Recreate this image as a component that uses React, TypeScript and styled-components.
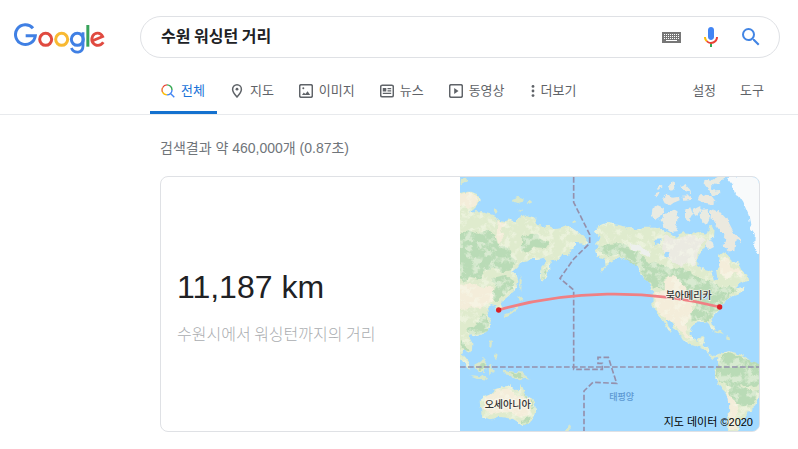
import React from "react";
import styled, { createGlobalStyle } from "styled-components";

const GlobalStyle = createGlobalStyle`
  *, *::before, *::after { box-sizing: border-box; }
  body {
    margin: 0;
    background: #fff;
    color: #202124;
    font-family: "Liberation Sans", "Noto Sans CJK KR", sans-serif;
    font-size: 14px;
  }
`;

const TopBar = styled.header`
  border-bottom: 1px solid #e8eaed;
`;

const SearchRow = styled.div`
  display: flex;
  align-items: center;
  padding: 16px 18px 0 14px;
`;

const LogoLink = styled.a`
  display: block;
  flex: 0 0 126px;
  padding-top: 2px;
  svg { display: block; }
`;

const SearchForm = styled.form`
  display: flex;
  align-items: center;
  flex: 1;
  height: 42px;
  max-width: 640px;
  padding: 0 16px 0 20px;
  border: 1px solid #dfe1e5;
  border-radius: 21px;
`;

const SearchInput = styled.input`
  flex: 1;
  min-width: 0;
  padding: 0 0 4px;
  border: 0;
  outline: 0;
  background: transparent;
  color: #202124;
  font: bold 16px/24px "Noto Sans CJK KR", sans-serif;
`;

const IconButton = styled.button`
  display: flex;
  align-items: center;
  justify-content: center;
  width: 40px;
  height: 40px;
  padding: 0;
  border: 0;
  background: none;
  cursor: pointer;
  &:last-child { width: 24px; margin-left: 8px; }
`;

const NavRow = styled.div`
  display: flex;
  justify-content: space-between;
  max-width: 798px;
  margin-top: 11px;
  padding: 0 34px 0 150px;
`;

const Tabs = styled.nav`
  display: flex;
  gap: 2px;
`;

const navText = `
  font-size: 13px;
  line-height: 20px;
  text-decoration: none;
  white-space: nowrap;
`;

const Tab = styled.a<{ $active?: boolean }>`
  ${navText}
  display: flex;
  align-items: center;
  gap: 6px;
  height: 45px;
  padding: 2px 12px 0 11px;
  border-bottom: 3px solid ${(p) => (p.$active ? "#1471cf" : "transparent")};
  color: ${(p) => (p.$active ? "#1a73d8" : "#5f6368")};
`;

const Tools = styled.div`
  display: flex;
  align-items: center;
  gap: 24px;
  height: 42px;
  padding-top: 2px;
`;

const ToolButton = styled.button`
  ${navText}
  padding: 0;
  border: 0;
  background: none;
  color: #5f6368;
  font-family: inherit;
  cursor: pointer;
`;

const Results = styled.main`
  max-width: 798px;
  padding: 22px 38px 16px 160px;
`;

const Stats = styled.p`
  margin: 0 0 17px;
  color: #70757a;
  line-height: 22px;
`;

const Card = styled.section`
  display: grid;
  grid-template-columns: 1fr 1fr;
  overflow: hidden;
  border: 1px solid #dfe1e5;
  border-radius: 8px;
`;

const Answer = styled.div`
  display: flex;
  flex-direction: column;
  justify-content: center;
  gap: 14px;
  padding: 4px 16px 0;
`;

const Distance = styled.h1`
  margin: 0;
  font-size: 32px;
  font-weight: 400;
  line-height: 40px;
`;

const Caption = styled.p`
  margin: 0;
  color: #aaadb0;
  font: 300 16px/24px "Noto Sans CJK KR", sans-serif;
`;

const MapLink = styled.a`
  position: relative;
  display: block;
  aspect-ratio: 299 / 254;
  overflow: hidden;
  background: #a3daff;
  color: #202124;
  text-decoration: none;
`;

const MapDrawing = styled.svg`
  display: block;
  width: 100%;
  height: 100%;
  text {
    font-family: "Noto Sans CJK KR", sans-serif;
    font-weight: 500;
    paint-order: stroke;
    stroke-linejoin: round;
  }
`;

const Attribution = styled.span`
  position: absolute;
  right: 6px;
  bottom: 0;
  color: #000;
  font-size: 11px;
  line-height: 17px;
`;

function Logo() {
  return (
    <svg width="91" height="31" viewBox="42 69 273 93" fill="none" strokeWidth="9" aria-hidden="true">
      <path d="M99 84.500A29.800 29.800 0 1 0 106 107H77" stroke="#4080e4" />
      <circle cx="137" cy="118" r="18" stroke="#e04a40" />
      <circle cx="185" cy="118" r="18" stroke="#f8b932" />
      <circle cx="232" cy="118" r="18" stroke="#4080e4" />
      <path d="M249 97V137C249 162 222 161 214 144" stroke="#4080e4" strokeWidth="8.500" />
      <path d="M263.500 75V140" stroke="#38a35b" />
      <path d="M276 123L308 109.500C302 96 285 96 278 108C270 125 283 136 294 136Q304 136 310 127" stroke="#e04a40" strokeWidth="8.500" />
    </svg>
  );
}

function KeyboardIcon() {
  const columns = [2, 4, 6, 8, 10, 12, 14, 16];
  return (
    <svg width="19" height="11" viewBox="0 0 19 11" shapeRendering="crispEdges" aria-hidden="true">
      <path d="M0 0h19v11H0z" fill="#777" />
      {[2, 4, 6].map((y) =>
        columns.map((x) => <path key={`${x}-${y}`} d={`M${x} ${y}h1v1h-1z`} fill="#fff" />)
      )}
      <path d="M4 8h11v1H4z" fill="#fff" />
    </svg>
  );
}

function MicIcon() {
  return (
    <svg width="24" height="24" viewBox="0 0 24 24" aria-hidden="true">
      <path fill="#4285f4" d="M12 15c1.660 0 3-1.310 3-2.970V4.980C15 3.320 13.660 2 12 2S9 3.320 9 4.980v7.050C9 13.690 10.340 15 12 15z" />
      <path fill="#34a853" d="M11 18.080h2V22h-2z" />
      <path fill="#fbbc05" d="M7.050 16.870C5.780 15.600 5 13.920 5 12h2c0 1.450.560 2.420 1.470 3.380z" />
      <path fill="#ea4335" d="M12 16.930c-1.440 0-2.660-.600-3.580-1.550l-1.370 1.490A6.960 6.960 0 0 0 11.990 19c3.870 0 7.010-3.130 7.010-7h-2c0 2.760-2.230 4.930-5 4.930z" />
    </svg>
  );
}

function SearchIcon() {
  return (
    <svg width="24" height="24" viewBox="0 0 24 24" fill="#4285e4" aria-hidden="true">
      <path d="M15.500 14h-.790l-.280-.270A6.470 6.470 0 0 0 16 9.500 6.500 6.500 0 1 0 9.500 16c1.610 0 3.090-.590 4.230-1.570l.270.280v.790l5 4.990L20.490 19zm-6 0C7.010 14 5 11.990 5 9.500S7.010 5 9.500 5 14 7.010 14 9.500 11.990 14 9.500 14z" />
    </svg>
  );
}

function TabIcon({ kind }: { kind: string }) {
  const frame = <rect x="0.700" y="0.700" width="12.600" height="12.600" rx="1.500" fill="none" stroke="currentColor" strokeWidth="1.500" />;
  return (
    <svg width={kind === "more" ? 5 : 14} height="14" viewBox={kind === "more" ? "0 0 5 14" : "0 0 14 14"} fill="currentColor" aria-hidden="true">
      {kind === "all" && (
        <g fill="none" strokeWidth="1.400">
          <path d="M1.700 3.500A5 5 0 0 1 6 .900" stroke="#ea4335" />
          <path d="M1.700 3.500A5 5 0 0 0 1.500 8" stroke="#ea7335" />
          <path d="M1.500 8A5 5 0 0 0 6 10.900" stroke="#fbbc05" />
          <path d="M6 .900A5 5 0 0 1 11 5.900" stroke="#34a853" />
          <path d="M11 5.900A5 5 0 0 1 6 10.900M9.500 9.500L13.300 13.300" stroke="#4285f4" />
        </g>
      )}
      {kind === "maps" && (
        <>
          <path d="M7 .800A4.400 4.400 0 0 0 2.600 5.200C2.600 8.200 7 13 7 13S11.400 8.200 11.400 5.200A4.400 4.400 0 0 0 7 .800Z" fill="none" stroke="currentColor" strokeWidth="1.500" />
          <circle cx="7" cy="5.200" r="1.400" />
        </>
      )}
      {kind === "images" && <>{frame}<circle cx="4.300" cy="4.300" r="1" /><path d="M3 11L4.800 8.500L6.300 10L8.600 7.300L11.200 11Z" /></>}
      {kind === "news" && (
        <>
          <rect x="0.700" y="1.200" width="12.600" height="11.600" rx="1.500" fill="none" stroke="currentColor" strokeWidth="1.500" />
          <path d="M2.800 4h3.500v3.500H2.800zM7.500 4h3.700v1.200H7.500zM7.500 6.300h3.700v1.200H7.500zM2.800 8.800h8.400V10H2.800z" />
        </>
      )}
      {kind === "videos" && <>{frame}<path d="M5.200 4L9.500 7L5.200 10Z" /></>}
      {kind === "more" && <><circle cx="3" cy="2.400" r="1.400" /><circle cx="3" cy="7" r="1.400" /><circle cx="3" cy="11.600" r="1.400" /></>}
    </svg>
  );
}

const continents = [
  // Asia
  "M0 56L20 50L40 50L58 58L65 75L60 90L45 105L35 112L70 112L98 118L112 124L120 137L145 142L152 130L166 138L182 128L195 126L208 120L230 127L240 150L275 154L290 162L310 160L325 153L342 160L360 172L378 185L391 200L385 210L365 205L350 203L352 212L340 224L330 240L312 240L300 253L280 260L273 268L274 287L262 305L250 320L246 300L250 275L262 262L258 248L240 252L215 252L200 258L186 264L176 278L160 292L176 299L181 320L172 345L155 360L141 372L130 381L137 398L130 408L117 405L112 394L99 390L87 400L92 419L99 438L95 455L82 471L61 480L44 484L36 478L32 489L43 509L42 525L28 535L17 522L12 536L31 562L40 586L30 581L0 540Z",
  // Australia
  "M65 674L76 665L95 659L110 646L125 641L135 634L149 633L161 627L162 639L174 649L184 645L189 626L196 642L205 659L218 669L230 684L234 704L226 729L215 746L195 750L180 741L165 732L140 728L120 725L99 733L84 729L74 724L72 704L66 689Z",
  // North and Central America
  "M408 170L425 151L445 143L480 149L510 158L535 164L555 155L590 155L616 166L636 173L650 185L680 172L710 176L730 170L750 174L755 150L770 160L768 185L750 195L740 215L720 245L718 270L740 285L760 290L768 317L778 310L775 285L790 270L782 240L795 232L812 240L822 265L838 258L850 285L868 300L870 318L845 325L835 340L860 335L852 351L825 362L804 376L795 392L787 402L768 422L760 435L769 462L763 470L753 446L740 440L715 443L701 455L698 475L706 495L719 500L726 485L740 482L738 499L732 510L750 516L755 535L768 543L795 536L792 547L766 551L749 535L735 521L720 514L695 506L675 496L665 479L650 459L635 439L620 431L636 458L642 474L631 465L615 439L600 419L590 407L583 388L585 347L570 322L550 301L540 276L525 262L500 250L485 246L470 256L448 271L427 292L430 282L443 272L441 255L420 246L410 226L425 215L411 205L429 190Z",
  // South America
  "M781 549L795 532L815 529L835 534L860 544L875 556L900 569L915 575V650L897 674L890 695L870 710L860 730L845 736L840 775H806L812 715L814 675L805 654L785 635L772 609L770 589L780 574Z",
];

const islands = [
  "M165 72L182 66L197 70L195 80L178 85L166 80Z",
  "M206 77L216 75L223 82L214 86Z",
  "M107 105L115 103L119 112L112 116Z",
  "M181 104L190 102L191 108Z",
  "M342 137L352 136L355 142L346 143Z",
  "M185 301L191 313L190 350L184 339Z",
  "M178 367L188 363L195 371L183 379Z",
  "M182 388L178 402L160 416L140 426L134 420L155 413L170 402Z",
  "M95 495L102 499L99 520L94 513Z",
  "M110 534L119 542L116 551L107 545Z",
  "M53 567L67 559L74 549L86 556L83 573L80 594L59 594L51 580Z",
  "M92 573L104 568L99 578L108 595L99 590L94 599Z",
  "M34 600L59 602L88 608L91 614L62 611Z",
  "M135 583L151 587L166 591L190 592L204 603L218 614L201 611L185 616L164 608L151 603Z",
  "M334 748L339 759L329 770L321 767Z",
  "M6 11L23 8L29 17L13 27L5 20Z",
  "M763 460L785 468L797 480L778 475Z",
  "M804 484L819 488L814 496L801 493Z",
];

const arctic = [
  "M593 42L606 30L614 36L603 45Z",
  "M592 55L602 51L606 59L595 64Z",
  "M583 101L599 91L618 99L617 111L609 124L590 139L581 119Z",
  "M617 116L645 104L658 108L661 136L653 153L663 168L637 171L618 157L608 133L618 127Z",
  "M613 71L625 56L637 59L644 68L663 65L665 76L647 83L637 91L620 85Z",
  "M632 27L647 18L649 39L637 44Z",
  "M667 34L681 27L697 45L700 55L683 48Z",
  "M674 65L699 64L699 75L676 78Z",
  "M683 104L697 97L703 118L692 137L678 126Z",
  "M705 104L727 93L728 111L710 126L704 118Z",
  "M725 62L744 56L764 67L773 78L762 87L738 83L719 75Z",
  "M743 11L762 15L779 6L799 6L782 30L760 27L759 47L786 45L787 55L760 62L751 42L740 29Z",
  "M730 104L752 102L754 131L747 145L730 147L727 126Z",
  "M757 103L775 111L783 103L791 113L805 128L819 155L828 173L845 188L849 202L833 193L829 229L813 229L794 212L808 193L792 174L779 158L770 137L755 128Z",
  "M745 192L760 194L768 216L751 225L742 206Z",
  "M804 6L914 0V244L895 233L888 215L891 177L878 159L872 121L856 83L843 64L831 57L824 31Z",
];

const greens = [
  "M0 180L32 165L62 177L87 164L111 180L118 205L154 222L160 245L177 257L160 284L134 292L112 279L84 283L65 312L34 306L21 322L0 309Z",
  "M193 184L230 175L248 193L276 200L263 220L229 216L207 235L190 225Z",
  "M100 310L142 300L169 319L163 341L135 363L116 380L101 360L113 338Z",
  "M75 413L94 435L86 468L62 478L39 479L21 464L58 451L65 435Z",
  "M6 491L22 510L32 529L18 526L5 509Z",
  "M249 285L269 276L267 293L252 312Z",
  "M421 222L445 207L485 204L519 221L548 235L570 262L607 266L636 282L663 277L696 291L727 309L761 320L789 339L814 334L842 344L818 360L800 377L763 379L728 366L690 356L683 335L648 302L619 310L620 342L586 337L561 313L545 282L515 260L480 233L446 247Z",
  "M710 378L772 365L798 382L767 421L751 439L701 437L696 413L714 405Z",
  "M790 541L812 530L856 548L910 570V630L866 637L852 627L831 646L807 629L781 621L773 594Z",
  "M812 646L843 631L874 649L903 646L884 690L849 694L820 671Z",
  "M61 570L80 565L78 584L59 590Z",
  "M153 591L185 596L196 609L166 604Z",
  "M200 655L221 678L229 696L220 706L207 681Z",
  "M188 738L219 725L211 748L197 750Z",
];

const sands = [
  "M0 60L33 51L58 64L56 91L30 102L6 91Z",
  "M0 330L45 324L68 337L104 335L119 366L90 386L66 403L38 397L0 408Z",
  "M119 140L146 147L129 162L138 189L122 208L115 187Z",
  "M81 667L120 645L155 640L172 661L186 661L216 687L218 720L193 728L145 708L99 719L76 704Z",
  "M625 304L663 301L688 322L682 356L703 378L702 421L681 448L688 478L705 494L680 486L658 455L625 433L596 405L590 386L590 354L618 346Z",
  "M618 180L650 192L696 179L741 193L719 232L713 274L686 262L670 276L631 251L612 223Z",
  "M807 645L830 667L842 705L830 731L840 766L812 764L814 686Z",
  "M783 254L809 247L818 279L842 282L856 305L830 294L804 313L786 293Z",
];

function WorldMap() {
  return (
    <MapDrawing viewBox="6 6 897 762" preserveAspectRatio="xMidYMid slice" role="img" aria-label="수원시에서 워싱턴까지의 지도">
      <defs>
        <filter id="coast" x="-5%" y="-5%" width="110%" height="110%" colorInterpolationFilters="sRGB">
          <feTurbulence type="fractalNoise" baseFrequency="0.060" numOctaves="3" seed="7" />
          <feDisplacementMap in="SourceGraphic" scale="15" xChannelSelector="R" yChannelSelector="G" />
          <feGaussianBlur stdDeviation="1.3" />
        </filter>
        <filter id="mottle" x="0" y="0" width="100%" height="100%" colorInterpolationFilters="sRGB">
          <feTurbulence type="fractalNoise" baseFrequency="0.045" numOctaves="4" seed="11" />
          <feColorMatrix values="0 0 0 0 0.97  0 0 0 0 0.98  0 0 0 0 0.92  5 0 0 0 -2.4" />
        </filter>
        <clipPath id="land">
          {continents.map((d) => <path key={d} d={d} />)}
        </clipPath>
      </defs>
      <path d="M0 0H910V780H0Z" fill="#a3daff" />
      <g filter="url(#coast)">
        {continents.map((d) => <path key={d} d={d} fill="#dfebcd" />)}
        {islands.map((d) => <path key={d} d={d} fill="#d9e8cb" />)}
        {arctic.map((d, i) => <path key={d} d={d} fill={i === arctic.length - 1 ? "#f8fafb" : i % 3 === 1 ? "#ebe9df" : "#e9ebe2"} />)}
        {sands.map((d, i) => <path key={d} d={d} fill={i === 5 ? "#ebeae2" : "#f4edda"} />)}
        {greens.map((d) => <path key={d} d={d} fill="#b9dbb6" />)}
        <g clipPath="url(#land)">
          <path d="M0 0H910V780H0Z" filter="url(#mottle)" opacity="0.500" />
        </g>
        <path d="M513 207L535 210L557 219L578 241L569 245L547 231L525 224Z" fill="#edf0ed" />
        <path d="M588 195L608 193L606 204L590 207ZM618 238L634 232L636 244L621 248ZM725 356L739 359L749 354L754 365L744 375L732 367Z" fill="#a3daff" />
      </g>
      <g fill="none" stroke="#9590ac" strokeWidth="5" strokeDasharray="17 7">
        <path d="M347 6V82L395 178V205L347 252L306 310L347 345V583H433V565H420V547H451L476 625L405 622L378 648V770" />
        <path d="M6 576H910" />
      </g>
      <path d="M122 405C325 346 565 340 785 396" fill="none" stroke="#f08084" strokeWidth="8" />
      <circle cx="122" cy="405" r="8" fill="#d91f26" />
      <circle cx="785" cy="396" r="8" fill="#d91f26" />
      <text x="692" y="371" textAnchor="middle" fontSize="30" fill="#333" stroke="#f5f3e9" strokeWidth="4">북아메리카</text>
      <text x="149" y="698" textAnchor="middle" fontSize="30" fill="#333" stroke="#f8f5e9" strokeWidth="8">오세아니아</text>
      <text x="491" y="674" textAnchor="middle" fontSize="27" fill="#5d98d2">태평양</text>
    </MapDrawing>
  );
}

const tabs = [
  { kind: "all", label: "전체" },
  { kind: "maps", label: "지도" },
  { kind: "images", label: "이미지" },
  { kind: "news", label: "뉴스" },
  { kind: "videos", label: "동영상" },
  { kind: "more", label: "더보기" },
];

export default function App() {
  return (
    <>
      <GlobalStyle />
      <TopBar>
        <SearchRow>
          <LogoLink href="#" aria-label="Google"><Logo /></LogoLink>
          <SearchForm role="search" onSubmit={(e) => e.preventDefault()}>
            <SearchInput type="text" aria-label="검색" defaultValue="수원 워싱턴 거리" />
            <IconButton type="button" aria-label="입력 도구"><KeyboardIcon /></IconButton>
            <IconButton type="button" aria-label="음성 검색"><MicIcon /></IconButton>
            <IconButton type="submit" aria-label="Google 검색"><SearchIcon /></IconButton>
          </SearchForm>
        </SearchRow>
        <NavRow>
          <Tabs>
            {tabs.map(({ kind, label }, i) => (
              <Tab key={kind} href="#" $active={i === 0} aria-current={i === 0 ? "page" : undefined}>
                <TabIcon kind={kind} />
                {label}
              </Tab>
            ))}
          </Tabs>
          <Tools>
            <ToolButton type="button">설정</ToolButton>
            <ToolButton type="button">도구</ToolButton>
          </Tools>
        </NavRow>
      </TopBar>
      <Results>
        <Stats>검색결과 약 460,000개 (0.87초)</Stats>
        <Card>
          <Answer>
            <Distance>11,187 km</Distance>
            <Caption>수원시에서 워싱턴까지의 거리</Caption>
          </Answer>
          <MapLink href="#">
            <WorldMap />
            <Attribution>지도 데이터 ©2020</Attribution>
          </MapLink>
        </Card>
      </Results>
    </>
  );
}
